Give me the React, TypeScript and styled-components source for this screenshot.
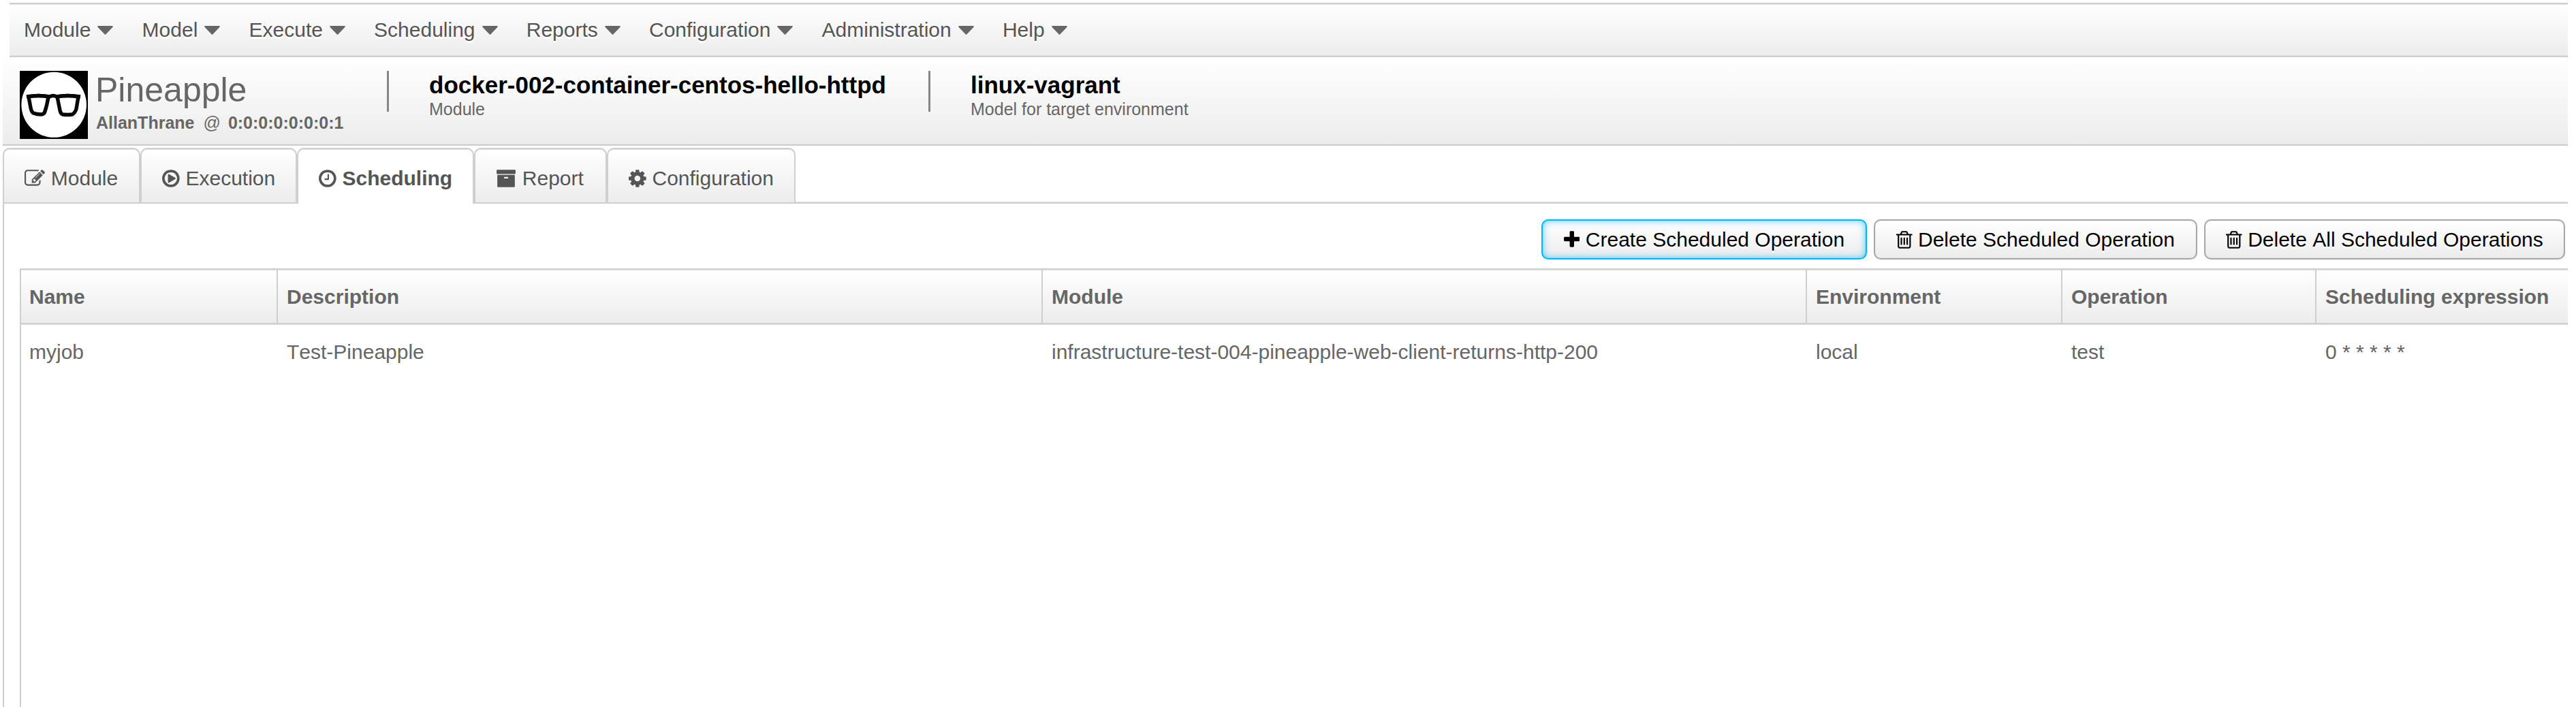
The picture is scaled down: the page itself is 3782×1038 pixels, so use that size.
import React from "react";
import styled, { createGlobalStyle } from "styled-components";

const GlobalStyle = createGlobalStyle`
  * { box-sizing: border-box; }
  html, body { margin: 0; background: #fff; }
  body {
    font-family: "Liberation Sans", Arial, Helvetica, sans-serif;
    font-size: 30px;
    font-kerning: none;
    color: #555;
    overflow: hidden;
  }
`;

const line = "#cfcfcf";
const softLine = "#e0e0e0";
const shade = "linear-gradient(to bottom, #ffffff, #ececec)";

const Page = styled.div`
  display: flex;
  flex-direction: column;
  width: 3770px;
  height: 1038px;
  padding: 4px 0 0 4px;
  overflow: hidden;
`;

const MenuBar = styled.nav`
  display: flex;
  align-items: center;
  flex: none;
  height: 80px;
  margin-left: 10px;
  padding-left: 21px;
  gap: 42.2px;
  background: ${shade};
  border-top: 2px solid ${line};
  border-bottom: 2px solid ${line};
  box-shadow: inset 0 1px 0 ${softLine}, inset 0 -1px 0 ${softLine};
`;

const MenuItem = styled.div`
  display: flex;
  align-items: center;
  gap: 10px;
  white-space: nowrap;
  line-height: 34px;
  text-shadow: 0 2.5px 0 #fff;
`;

const Caret = styled.svg`
  width: 23px;
  height: 13px;
  fill: #666;
`;

const Header = styled.header`
  display: flex;
  align-items: flex-start;
  flex: none;
  height: 130px;
  padding: 20px 0 0 25px;
  background: ${shade};
  border-bottom: 2px solid ${line};
  box-shadow: inset 0 -1px 0 ${softLine};
`;

const Logo = styled.svg`
  width: 100px;
  height: 100px;
  flex: none;
`;

const Brand = styled.div`
  width: 428px;
  padding: 3px 0 0 11px;
  margin-right: 11px;
  color: #666;
`;

const BrandName = styled.div`
  font-size: 50px;
  line-height: 50px;
`;

const UserLine = styled.div`
  display: flex;
  margin-top: 8px;
  padding-left: 1px;
  font-size: 25px;
  line-height: 30px;
`;

const At = styled.span`
  margin: 0 11px 0 13px;
`;

const Info = styled.div<{ $width: number }>`
  width: ${(p) => p.$width}px;
  height: 60px;
  padding: 1px 0 0 59px;
  border-left: 3px solid #868686;
  white-space: nowrap;
`;

const InfoTitle = styled.div`
  font-size: 35px;
  font-weight: bold;
  line-height: 40px;
  color: #000;
`;

const InfoLabel = styled.div`
  margin-top: 3px;
  font-size: 25px;
  line-height: 25px;
  color: #666;
`;

const Tabs = styled.div`
  display: flex;
  flex: none;
  height: 85px;
  padding-top: 3px;
`;

const Tab = styled.div<{ $width: number; $active?: boolean }>`
  display: flex;
  align-items: center;
  gap: 8.4px;
  width: ${(p) => p.$width}px;
  height: 82px;
  padding: 7px 0 ${(p) => (p.$active ? 2 : 0)}px 30.4px;
  white-space: nowrap;
  font-weight: ${(p) => (p.$active ? "bold" : "normal")};
  background: ${(p) => (p.$active ? "#fff" : shade)};
  border: 2px solid ${line};
  border-bottom: ${(p) => (p.$active ? "0" : `2px solid ${line}`)};
  border-radius: 10px 10px 0 0;
  box-shadow: inset 0 1px 0 ${softLine};
`;

const TabFiller = styled.div`
  flex: 1;
  border-bottom: 2px solid ${line};
  box-shadow: inset 0 -1px 0 ${softLine};
`;

const Content = styled.main`
  display: flex;
  flex-direction: column;
  flex: 1;
  border-left: 2px solid ${line};
  padding: 23px 0 0 23px;
`;

const Toolbar = styled.div`
  display: flex;
  justify-content: flex-end;
  gap: 10px;
  height: 72px;
  padding-right: 4px;
`;

const Button = styled.button<{ $width: number; $focused?: boolean }>`
  display: flex;
  align-items: center;
  justify-content: center;
  gap: 8.4px;
  width: ${(p) => p.$width}px;
  height: 59px;
  padding: 0;
  font: inherit;
  font-kerning: none;
  color: #000;
  white-space: nowrap;
  text-shadow: 0 2.5px 0 #fff;
  background: ${shade};
  border: 2px solid ${(p) => (p.$focused ? "#00b7ff" : "#a8a8a8")};
  border-radius: 10px;
  box-shadow: ${(p) =>
    p.$focused ? "inset 0 0 1px #00b7ff, inset 0 0 11px #00b7ffb0" : "inset 0 0 1px #a8a8a8"};
`;

const Grid = styled.div`
  display: flex;
  flex-direction: column;
  flex: 1;
  border-left: 2px solid ${line};
`;

const columns = "377px 1123px 1122px 375px 373px 1fr";

const HeadRow = styled.div`
  display: grid;
  grid-template-columns: ${columns};
  height: 82px;
  background: ${shade};
  border-top: 2px solid ${line};
  border-bottom: 2px solid ${line};
  box-shadow: inset 0 1px 0 ${softLine}, 0 1px 0 ${softLine};
  font-weight: bold;
  color: #666;
`;

const HeadCell = styled.div`
  padding: 23px 0 0 13px;
  line-height: 34px;
  white-space: nowrap;
  border-right: 2px solid ${line};
  &:first-child { padding-left: 12px; }
  &:last-child { border-right: 0; }
`;

const BodyRow = styled.div`
  display: grid;
  grid-template-columns: ${columns};
  padding-top: 24px;
  line-height: 34px;
  color: #666;
`;

const BodyCell = styled.div`
  padding-left: 13px;
  white-space: nowrap;
  &:first-child { padding-left: 12px; }
`;

const Glyph = styled.svg<{ $units: number }>`
  flex: none;
  width: ${(p) => (p.$units / 1792) * 30}px;
  height: 30px;
  fill: currentColor;
`;

type IconShape = { x: number; units: number; d: string };

const icons: Record<string, IconShape> = {
  edit: {
    x: 0,
    units: 1792,
    d: "M888 1184l116-116-152-152-116 116v56h96v96h56zm440-720q-16-16-33 1l-350 350q-17 17-1 33t33-1l350-350q17-17 1-33zm80 594v190q0 119-84.5 203.5t-203.5 84.5h-832q-119 0-203.5-84.5t-84.5-203.5v-832q0-119 84.5-203.5t203.5-84.5h832q63 0 117 25 15 7 18 23 3 17-9 29l-49 49q-14 14-32 8-23-6-45-6h-832q-66 0-113 47t-47 113v832q0 66 47 113t113 47h832q66 0 113-47t47-113v-126q0-13 9-22l64-64q15-15 35-7t20 29zm-96-738l288 288-672 672h-288v-288zm444 132l-92 92-288-288 92-92q28-28 68-28t68 28l152 152q28 28 28 68t-28 68z",
  },
  play: {
    x: 0,
    units: 1536,
    d: "M1184 896q0 37-32 55l-544 320q-15 9-32 9-16 0-32-8-32-19-32-56v-640q0-37 32-56 33-18 64 1l544 320q32 18 32 55zm128 0q0-148-73-273t-198-198-273-73-273 73-198 198-73 273 73 273 198 198 273 73 273-73 198-198 73-273zm224 0q0 209-103 385.5t-279.5 279.5-385.5 103-385.5-103-279.5-279.5-103-385.5 103-385.5 279.5-279.5 385.5-103 385.5 103 279.5 279.5 103 385.5z",
  },
  clock: {
    x: 0,
    units: 1536,
    d: "M896 544v448q0 14-9 23t-23 9h-320q-14 0-23-9t-9-23v-64q0-14 9-23t23-9h224v-352q0-14 9-23t23-9h64q14 0 23 9t9 23zm416 352q0-148-73-273t-198-198-273-73-273 73-198 198-73 273 73 273 198 198 273 73 273-73 198-198 73-273zm224 0q0 209-103 385.5t-279.5 279.5-385.5 103-385.5-103-279.5-279.5-103-385.5 103-385.5 279.5-279.5 385.5-103 385.5 103 279.5 279.5 103 385.5z",
  },
  archive: {
    x: 0,
    units: 1792,
    d: "M1088 832q0-26-19-45t-45-19h-256q-26 0-45 19t-19 45 19 45 45 19h256q26 0 45-19t19-45zm576-192v960q0 26-19 45t-45 19h-1408q-26 0-45-19t-19-45v-960q0-26 19-45t45-19h1408q26 0 45 19t19 45zm64-448v256q0 26-19 45t-45 19h-1536q-26 0-45-19t-19-45v-256q0-26 19-45t45-19h1536q26 0 45 19t19 45z",
  },
  cog: {
    x: 128,
    units: 1536,
    d: "M1152 896q0-106-75-181t-181-75-181 75-75 181 75 181 181 75 181-75 75-181zm512-109v222q0 12-8 23t-20 13l-185 28q-19 54-39 91 35 50 107 138 10 12 10 25t-9 23q-27 37-99 108t-94 71q-12 0-26-9l-138-108q-44 23-91 38-16 136-29 186-7 28-36 28h-222q-14 0-24.5-8.5t-11.5-21.5l-28-184q-49-16-90-37l-141 107q-10 9-25 9-14 0-25-11-126-114-165-168-7-10-7-23 0-12 8-23 15-21 51-66.5t54-70.5q-27-50-41-99l-183-27q-13-2-21-12.5t-8-23.5v-222q0-12 8-23t19-13l186-28q14-46 39-92-40-57-107-138-10-12-10-24 0-10 9-23 26-36 98.5-107.5t94.5-71.5q13 0 26 10l138 107q44-23 91-38 16-136 29-186 7-28 36-28h222q14 0 24.5 8.5t11.5 21.5l28 184q49 16 90 37l142-107q9-9 24-9 13 0 25 10 129 119 165 170 7 8 7 22 0 12-8 23-15 21-51 66.5t-54 70.5q26 50 41 98l183 28q13 2 21 12.5t8 23.5z",
  },
  plus: {
    x: 192,
    units: 1408,
    d: "M1600 736v192q0 40-28 68t-68 28h-416v416q0 40-28 68t-68 28h-192q-40 0-68-28t-28-68v-416h-416q-40 0-68-28t-28-68v-192q0-40 28-68t68-28h416v-416q0-40 28-68t68-28h192q40 0 68 28t28 68v416h416q40 0 68 28t28 68z",
  },
  trash: {
    x: 192,
    units: 1408,
    d: "M704 736v576q0 14-9 23t-23 9h-64q-14 0-23-9t-9-23v-576q0-14 9-23t23-9h64q14 0 23 9t9 23zm256 0v576q0 14-9 23t-23 9h-64q-14 0-23-9t-9-23v-576q0-14 9-23t23-9h64q14 0 23 9t9 23zm256 0v576q0 14-9 23t-23 9h-64q-14 0-23-9t-9-23v-576q0-14 9-23t23-9h64q14 0 23 9t9 23zm128 724v-948h-896v948q0 22 7 40.5t14.5 27 10.5 8.5h832q3 0 10.5-8.5t14.5-27 7-40.5zm-672-1076h448l-48-117q-7-9-17-11h-317q-10 2-17 11zm928 32v64q0 14-9 23t-23 9h-96v948q0 83-47 143.5t-113 60.5h-832q-66 0-113-58.5t-47-141.5v-952h-96q-14 0-23-9t-9-23v-64q0-14 9-23t23-9h309l70-167q15-37 54-63t79-26h320q40 0 79 26t54 63l70 167h309q14 0 23 9t9 23z",
  },
};

function Icon({ name }: { name: string }) {
  const { x, units, d } = icons[name];
  return (
    <Glyph $units={units} viewBox={`${x} 0 ${units} 1792`} aria-hidden>
      <path d={d} />
    </Glyph>
  );
}

const menus = ["Module", "Model", "Execute", "Scheduling", "Reports", "Configuration", "Administration", "Help"];

const tabs = [
  { label: "Module", icon: "edit", width: 202 },
  { label: "Execution", icon: "play", width: 230 },
  { label: "Scheduling", icon: "clock", width: 260, active: true },
  { label: "Report", icon: "archive", width: 195 },
  { label: "Configuration", icon: "cog", width: 277 },
];

const buttons = [
  { label: "Create Scheduled Operation", icon: "plus", width: 478, focused: true },
  { label: "Delete Scheduled Operation", icon: "trash", width: 475 },
  { label: "Delete All Scheduled Operations", icon: "trash", width: 530 },
];

const headings = ["Name", "Description", "Module", "Environment", "Operation", "Scheduling expression"];

const jobs = [
  ["myjob", "Test-Pineapple", "infrastructure-test-004-pineapple-web-client-returns-http-200", "local", "test", "0 * * * * *"],
];

export default function App() {
  return (
    <>
      <GlobalStyle />
      <Page>
        <MenuBar>
          {menus.map((m) => (
            <MenuItem key={m}>
              {m}
              <Caret viewBox="0 0 23 13">
                <path d="M1.2 0H21.8Q23.6 .4 22.3 2L12.5 12.2Q11.5 13.2 10.5 12.2L.7 2Q-.6 .4 1.2 0Z" />
              </Caret>
            </MenuItem>
          ))}
        </MenuBar>
        <Header>
          <Logo viewBox="0 0 100 100">
            <rect width="100" height="100" fill="#000" />
            <ellipse cx="50.2" cy="49.8" rx="47.8" ry="48" fill="#fff" />
            <g fill="none" stroke="#080808" strokeWidth="5.4" strokeLinejoin="round">
              <path d="M13 38Q28 35 42 38Q40 51 36.500 61Q35 64 31 64Q25 64 20 62Q17 60 16 54Z" />
              <path d="M55 38Q70 35 86 38L83 56Q81 62 77 64Q70 65 63 64Q60 63 59 58Z" />
              <path d="M10 38Q28 35 44 38Q49 35 54 38Q70 35 89 38" />
            </g>
          </Logo>
          <Brand>
            <BrandName>Pineapple</BrandName>
            <UserLine>
              <b>AllanThrane</b>
              <At>@</At>
              <b>0:0:0:0:0:0:0:1</b>
            </UserLine>
          </Brand>
          <Info $width={795}>
            <InfoTitle>docker-002-container-centos-hello-httpd</InfoTitle>
            <InfoLabel>Module</InfoLabel>
          </Info>
          <Info $width={500}>
            <InfoTitle>linux-vagrant</InfoTitle>
            <InfoLabel>Model for target environment</InfoLabel>
          </Info>
        </Header>
        <Tabs>
          {tabs.map((t) => (
            <Tab key={t.label} $width={t.width} $active={t.active}>
              <Icon name={t.icon} />
              {t.label}
            </Tab>
          ))}
          <TabFiller />
        </Tabs>
        <Content>
          <Toolbar>
            {buttons.map((b) => (
              <Button key={b.label} $width={b.width} $focused={b.focused}>
                <Icon name={b.icon} />
                {b.label}
              </Button>
            ))}
          </Toolbar>
          <Grid>
            <HeadRow>
              {headings.map((h) => (
                <HeadCell key={h}>{h}</HeadCell>
              ))}
            </HeadRow>
            {jobs.map((job) => (
              <BodyRow key={job[0]}>
                {job.map((value, i) => (
                  <BodyCell key={i}>{value}</BodyCell>
                ))}
              </BodyRow>
            ))}
          </Grid>
        </Content>
      </Page>
    </>
  );
}
